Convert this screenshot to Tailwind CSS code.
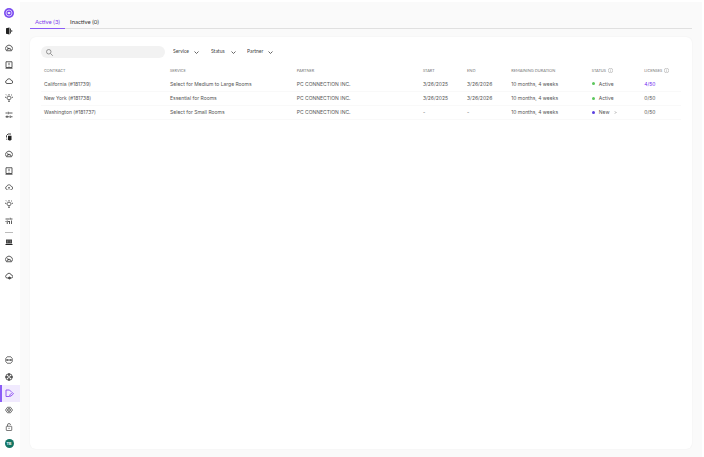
<!DOCTYPE html>
<html lang="en">
<head>
<meta charset="utf-8">
<meta name="viewport" content="width=device-width, initial-scale=1">
<title>Contracts</title>
<script src="https://cdn.jsdelivr.net/npm/@tailwindcss/browser@4"></script>
</head>
<body class="bg-white font-[Lato,sans-serif] text-[#555]">
<svg class="hidden" aria-hidden="true">
  <symbol id="gauge" viewBox="0 0 16 16"><path d="M3 13.500A7 6.500 0 1 1 13 13.500Z"/><path d="M4 12.500a4 4 0 0 1 8 0M8 11 5 6.500"/></symbol>
  <symbol id="alert" viewBox="0 0 16 16"><path d="M2 1.500h12v11.500H2ZM8 3.500v4.500M8 9.500v1.500M1 14.500h14"/></symbol>
  <symbol id="cloud" viewBox="0 0 16 16"><path d="M4 13a3.200 3.200 0 0 1-.3-6.300 4.500 4.500 0 0 1 8.700.3A3 3 0 0 1 12.500 13Z"/></symbol>
  <symbol id="cloud-up" viewBox="0 0 16 16"><path d="M5 13H4a3.200 3.200 0 0 1-.3-6.300 4.500 4.500 0 0 1 8.700.3A3 3 0 0 1 12.500 13H11M8 13V8.500M6.500 10 8 8.500 9.500 10"/></symbol>
  <symbol id="bulb" viewBox="0 0 16 16"><path d="M6 11.500C3 9 4 4 8 4s5 5 2 7.500ZM6 14.500h4M8 0v2M0 6.500h2.500M13.500 6.500H16M2 1l1.700 1.700M14 1l-1.700 1.700"/></symbol>
  <symbol id="sliders" viewBox="0 0 16 16"><path d="M1 4h4M8 4h7M1 11.500h8M12 11.500h3M6.500 1.500v5M10.500 9v5M4 9v5"/></symbol>
</svg>
<div class="flex min-h-screen">
  <nav aria-label="Main" class="flex w-5 shrink-0 flex-col items-center pt-2 pb-[5px] text-[#333]">
    <a href="#" aria-label="Home" class="mb-[5px] pr-[2px]"><svg class="size-[10px]" viewBox="0 0 20 20" fill="none"><circle cx="10" cy="10" r="10" fill="#7c4df0"/><circle cx="10" cy="10" r="6" stroke="#ddd0ff" stroke-width="1.800"/><rect x="7.500" y="8" width="5" height="4" rx="1" fill="#eee6ff"/></svg></a>
    <ul class="flex h-[100px] w-full flex-col pr-[2px]">
      <li class="flex flex-1"><a href="#" aria-label="Rooms" class="m-auto"><svg class="size-2" viewBox="0 0 16 16"><path fill="#222" d="M2 2.500 9 1v14l-7-1.500Z"/><path fill="#444" d="M10 3h2v10h-2Z"/><circle cx="13" cy="8" r="2" fill="#777"/></svg></a></li>
      <li class="flex flex-1"><a href="#" aria-label="Room dashboard" class="m-auto"><svg class="size-2 fill-none stroke-current stroke-[1.6]"><use href="#gauge"/></svg></a></li>
      <li class="flex flex-1"><a href="#" aria-label="Room alerts" class="m-auto"><svg class="size-2 fill-none stroke-current stroke-[1.6]"><use href="#alert"/></svg></a></li>
      <li class="flex flex-1"><a href="#" aria-label="Room updates" class="m-auto"><svg class="size-2 fill-none stroke-current stroke-[1.6]"><use href="#cloud"/></svg></a></li>
      <li class="flex flex-1"><a href="#" aria-label="Room insights" class="m-auto"><svg class="size-2 fill-none stroke-current stroke-[1.6]"><use href="#bulb"/></svg></a></li>
      <li class="flex flex-1"><a href="#" aria-label="Room settings" class="m-auto"><svg class="size-2 fill-none stroke-current stroke-[1.6]"><use href="#sliders"/></svg></a></li>
    </ul>
    <ul class="mt-[6px] flex h-[100px] w-full flex-col pr-[2px]">
      <li class="flex flex-1"><a href="#" aria-label="Desks" class="m-auto"><svg class="size-2" viewBox="0 0 16 16"><path fill="#222" d="M6 5.500h7V13l-2 2H8l-2-2Z"/><path d="M3 9V5l3-3h6" fill="none" stroke="#444" stroke-width="2"/><path d="M3.500 11v3" stroke="#444" stroke-width="1.500"/></svg></a></li>
      <li class="flex flex-1"><a href="#" aria-label="Desk dashboard" class="m-auto"><svg class="size-2 fill-none stroke-current stroke-[1.6]"><use href="#gauge"/></svg></a></li>
      <li class="flex flex-1"><a href="#" aria-label="Desk alerts" class="m-auto"><svg class="size-2 fill-none stroke-current stroke-[1.6]"><use href="#alert"/></svg></a></li>
      <li class="flex flex-1"><a href="#" aria-label="Desk updates" class="m-auto"><svg class="size-2 fill-none stroke-current stroke-[1.4]"><use href="#cloud-up"/></svg></a></li>
      <li class="flex flex-1"><a href="#" aria-label="Desk insights" class="m-auto"><svg class="size-2 fill-none stroke-current stroke-[1.6]"><use href="#bulb"/></svg></a></li>
      <li class="flex flex-1"><a href="#" aria-label="Desk settings" class="m-auto"><svg class="size-2 fill-none stroke-current stroke-[1.6]" viewBox="0 0 16 16"><path d="M1 4h8M12 4h3M1 9h2M6 9h4M4.500 7v7M9 9v5M13 7v7M10.500 1.500v4"/></svg></a></li>
    </ul>
    <hr class="mt-[3px] mr-[2px] w-2 border-[#bbb]">
    <ul class="mt-px mb-auto flex h-[50px] w-full flex-col pr-[2px]">
      <li class="flex flex-1"><a href="#" aria-label="Devices" class="m-auto"><svg class="size-2" viewBox="0 0 16 16"><path fill="#444" d="M2 3h12v8H2Z"/><path fill="#222" d="M1 12h14v2H1Z"/><path d="M5 5v4M8 5v2M11 5v4" stroke="#999"/></svg></a></li>
      <li class="flex flex-1"><a href="#" aria-label="Device dashboard" class="m-auto"><svg class="size-2 fill-none stroke-current stroke-[1.6]"><use href="#gauge"/></svg></a></li>
      <li class="flex flex-1"><a href="#" aria-label="Device updates" class="m-auto"><svg class="size-2 fill-none stroke-current stroke-[1.6]" viewBox="0 0 16 16"><path d="M4 12a3.200 3.200 0 0 1-.3-6.300 4.500 4.500 0 0 1 8.700.3A3 3 0 0 1 12.500 12Z"/><circle cx="9" cy="12" r="2" fill="#555"/></svg></a></li>
    </ul>
    <ul class="flex h-[100px] w-full flex-col">
      <li class="flex flex-1 pr-[2px]"><a href="#" aria-label="Messages" class="m-auto"><svg class="size-2 fill-none stroke-current stroke-[1.4]" viewBox="0 0 16 16"><path d="M4.500 1.500h7l3 3.500v6l-3 3.500h-7l-3-3.500V5Z"/><path d="M4 6v4M12 6v4M4 8h8" stroke-width="1.800"/></svg></a></li>
      <li class="flex flex-1 pr-[2px]"><a href="#" aria-label="Support" class="m-auto"><svg class="size-2 fill-none stroke-[#333]" viewBox="0 0 16 16"><circle cx="8" cy="8" r="6.500" stroke-width="1.600"/><circle cx="8" cy="8" r="2.800" stroke-width="1.200"/><path d="M8 1v4M8 11v4M1 8h4M11 8h4" stroke-width="3"/></svg></a></li>
      <li class="flex flex-1 border-l-2 border-[#8b5cf6] bg-[#f1eafe] pr-[3px]"><a href="#" aria-label="Contracts" aria-current="page" class="m-auto"><svg class="size-[9px] fill-none stroke-[#8b4df0] stroke-[1.8]" viewBox="0 0 18 18"><path d="M8 15H2V2h7l4 4M9 15l1-3.500 4.500-4.500 2.500 2.500-5 4.500Z"/></svg></a></li>
      <li class="flex flex-1 pr-[2px]"><a href="#" aria-label="Settings" class="m-auto"><svg class="size-2 fill-none stroke-current stroke-[1.4]" viewBox="0 0 16 16"><path d="M5 2.500h6l4 5.500-4 5.500H5L1 8Z"/><circle cx="8" cy="8" r="3"/><circle cx="8" cy="8" r=".6"/></svg></a></li>
      <li class="flex flex-1 pr-[2px]"><a href="#" aria-label="Security" class="m-auto"><svg class="size-2 fill-none stroke-current stroke-[1.3]" viewBox="0 0 16 16"><rect x="2.500" y="6.500" width="11" height="8.500" rx="1"/><path d="M5 6.500V4a3 3 0 0 1 6 0M8 9.500v2.500"/></svg></a></li>
      <li class="flex flex-1 pr-[2px]"><button type="button" aria-label="Account" class="m-auto flex size-[9px] items-center justify-center rounded-full bg-[#137565] text-[4px] leading-none font-bold text-white">TB</button></li>
    </ul>
  </nav>

  <main class="mt-[2px] mr-[2px] flex min-w-0 flex-1 flex-col bg-[#fafafa] px-[10px] pb-2">
    <div role="tablist" class="mt-[14px] flex h-[13px] border-b border-[#e0e0e0] text-[6px] leading-[10px]">
      <button type="button" role="tab" aria-selected="true" class="-mb-px flex w-[35px] justify-center border-b border-[#8b5cf6] pt-px text-[#7c3aed]">Active (3)</button>
      <button type="button" role="tab" aria-selected="false" class="ml-[5px] flex pt-px text-[#333]">Inactive (0)</button>
    </div>
    <section class="mt-2 flex-1 rounded-md bg-white px-[11px] pt-[9px] shadow-[0_0_2px_rgba(0,0,0,0.06)]">
      <form class="flex h-3 items-center gap-2 text-[5px] text-[#444]">
        <label class="flex h-3 w-[124px] items-center gap-1 rounded-full bg-[#f2f2f2] px-[5px]">
          <svg class="size-[7px] shrink-0 fill-none stroke-[#777] stroke-[1.5]" viewBox="0 0 14 14"><circle cx="5.500" cy="5.500" r="4.500"/><path d="m9 9 4.500 4.500"/></svg>
          <input type="search" aria-label="Search contracts" class="h-2 w-full min-w-0 bg-transparent outline-none">
        </label>
        <label class="flex items-center">
          <select aria-label="Service" class="w-[21px] appearance-none"><option>Service</option></select>
          <svg class="h-[3px] w-[5px] fill-none stroke-[#555] stroke-[1.8]" viewBox="0 0 10 6"><path d="m1 1 4 4 4-4"/></svg>
        </label>
        <label class="ml-1 flex items-center">
          <select aria-label="Status" class="w-5 appearance-none"><option>Status</option></select>
          <svg class="h-[3px] w-[5px] fill-none stroke-[#555] stroke-[1.8]" viewBox="0 0 10 6"><path d="m1 1 4 4 4-4"/></svg>
        </label>
        <label class="ml-[3px] flex items-center">
          <select aria-label="Partner" class="w-[21px] appearance-none"><option>Partner</option></select>
          <svg class="h-[3px] w-[5px] fill-none stroke-[#555] stroke-[1.8]" viewBox="0 0 10 6"><path d="m1 1 4 4 4-4"/></svg>
        </label>
      </form>
      <table class="mt-[6px] w-full table-fixed border-collapse text-left text-[5px] leading-[8px] whitespace-nowrap">
        <thead class="text-[4px] text-[#777] uppercase">
          <tr class="h-[13px]">
            <th class="w-[19.7%] pl-[3px] font-normal">Contract</th>
            <th class="w-[19.8%] pl-[3px] font-normal">Service</th>
            <th class="w-[19.7%] pl-[3px] font-normal">Partner</th>
            <th class="w-[6.9%] pl-[3px] font-normal">Start</th>
            <th class="w-[6.9%] pl-[3px] font-normal">End</th>
            <th class="w-[12.6%] pl-[3px] font-normal">Remaining duration</th>
            <th class="w-[8.2%] pl-[3px] font-normal"><span class="flex items-center gap-[2px]">Status <svg class="size-[5px] fill-none stroke-[#999]" viewBox="0 0 10 10"><circle cx="5" cy="5" r="4.500"/><path d="M5 4.500v3M5 2.500v1"/></svg></span></th>
            <th class="pl-[3px] font-normal"><span class="flex items-center gap-[2px]">Licenses <svg class="size-[5px] fill-none stroke-[#999]" viewBox="0 0 10 10"><circle cx="5" cy="5" r="4.500"/><path d="M5 4.500v3M5 2.500v1"/></svg></span></th>
          </tr>
        </thead>
        <tbody class="font-[Inter,sans-serif]">
          <tr class="h-[14px] border-b border-[#f9f9f9]">
            <td class="pl-[3px]">California (#181739)</td><td class="pl-[3px]">Select for Medium to Large Rooms</td><td class="pl-[3px]">PC CONNECTION INC.</td><td class="pl-[3px]">3/26/2025</td><td class="pl-[3px]">3/26/2026</td><td class="pl-[3px]">10 months, 4 weeks</td>
            <td class="pl-[3px]"><span class="flex items-center gap-1"><i class="size-[3px] rounded-full bg-[#5cc65c]"></i>Active</span></td>
            <td class="pl-[3px]"><a href="#" class="text-[#6d28f0]">4/50</a></td>
          </tr>
          <tr class="h-[14px] border-b border-[#f9f9f9]">
            <td class="pl-[3px]">New York (#181738)</td><td class="pl-[3px]">Essential for Rooms</td><td class="pl-[3px]">PC CONNECTION INC.</td><td class="pl-[3px]">3/26/2025</td><td class="pl-[3px]">3/26/2026</td><td class="pl-[3px]">10 months, 4 weeks</td>
            <td class="pl-[3px]"><span class="flex items-center gap-1"><i class="size-[3px] rounded-full bg-[#5cc65c]"></i>Active</span></td>
            <td class="pl-[3px]">0/50</td>
          </tr>
          <tr class="h-[14px] border-b border-[#f9f9f9]">
            <td class="pl-[3px]">Washington (#181737)</td><td class="pl-[3px]">Select for Small Rooms</td><td class="pl-[3px]">PC CONNECTION INC.</td><td class="pl-[3px]">-</td><td class="pl-[3px]">-</td><td class="pl-[3px]">10 months, 4 weeks</td>
            <td class="pl-[3px]"><span class="flex items-center gap-1"><i class="size-[3px] rounded-full bg-[#5b3fe0]"></i>New <svg class="size-[3px] fill-none stroke-[#999]" viewBox="0 0 6 6"><path d="m1 1 2 2-2 2M3 1l2 2-2 2"/></svg></span></td>
            <td class="pl-[3px]">0/50</td>
          </tr>
        </tbody>
      </table>
    </section>
  </main>
</div>
</body>
</html>
